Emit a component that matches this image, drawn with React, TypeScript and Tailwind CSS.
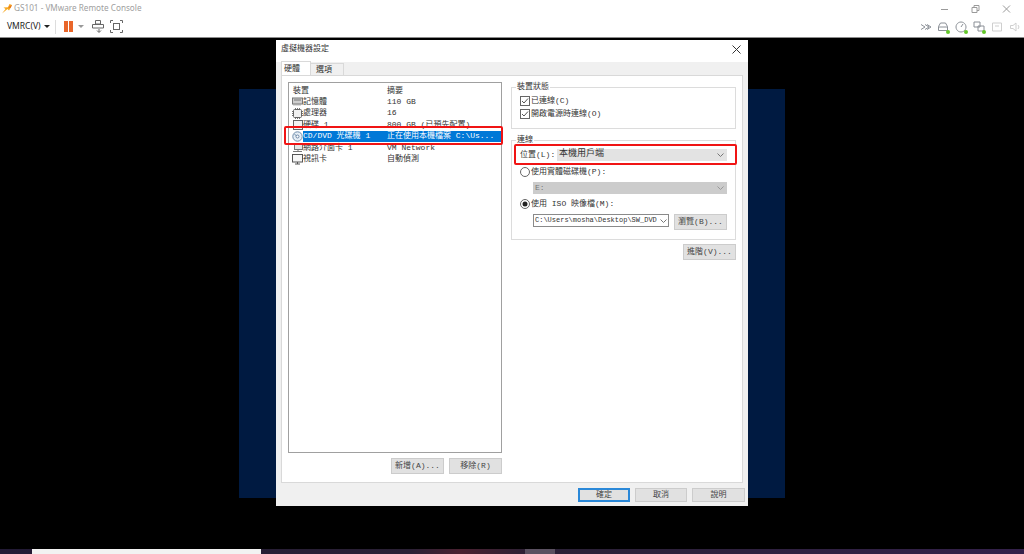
import React from "react";

const MONO = "font-['Liberation_Mono','Noto_Sans_CJK_TC',monospace]";

const devices = [
  { name: "記憶體", summary: "110 GB", icon: "mem" },
  { name: "處理器", summary: "16", icon: "cpu" },
  { name: "硬碟 1", summary: "800 GB (已預先配置)", icon: "disk" },
  { name: "CD/DVD 光碟機 1", summary: "正在使用本機檔案 C:\\Us...", icon: "cd", selected: true },
  { name: "網路介面卡 1", summary: "VM Network", icon: "net" },
  { name: "視訊卡", summary: "自動偵測", icon: "disp" },
];

const DeviceIcon = ({ kind }: { kind: string }) => {
  if (kind === "cd")
    return (
      <svg width="11" height="11" viewBox="0 0 11 11" fill="none">
        <circle cx="5.5" cy="5.5" r="4.7" fill="#e6eef6" stroke="#6f8dab" />
        <circle cx="5.5" cy="5.5" r="1.5" fill="#fff" stroke="#4f6f92" strokeWidth="0.8" />
        <path d="M2.5 3l2 2" stroke="#6f8dab" />
      </svg>
    );
  if (kind === "mem")
    return (
      <svg width="11" height="9" viewBox="0 0 11 9" fill="none">
        <rect x="0.5" y="1" width="10" height="6" fill="#cfcfcf" stroke="#777" />
        <path d="M2 7.5v1M4 7.5v1M6 7.5v1M8 7.5v1M2 3h7" stroke="#777" />
      </svg>
    );
  if (kind === "cpu")
    return (
      <svg width="11" height="11" viewBox="0 0 11 11" fill="none">
        <rect x="1.5" y="1.5" width="8" height="8" rx="1" fill="#f1f1f1" stroke="#666" />
        <path d="M3.5 0v1M5.5 0v1M7.5 0v1M3.5 10v1M5.5 10v1M7.5 10v1M0 3.5h1M0 5.5h1M0 7.5h1M10 3.5h1M10 5.5h1M10 7.5h1" stroke="#777" />
      </svg>
    );
  if (kind === "disk")
    return (
      <svg width="11" height="10" viewBox="0 0 11 10" fill="none">
        <rect x="1.5" y="0.5" width="9" height="9" fill="#f4f4f4" stroke="#666" />
      </svg>
    );
  if (kind === "net")
    return (
      <svg width="11" height="10" viewBox="0 0 11 10" fill="none">
        <rect x="2.5" y="0.5" width="8" height="6" fill="#e6e6e6" stroke="#777" />
        <path d="M1 8.5h9M6 6.5v2" stroke="#777" />
      </svg>
    );
  return (
    <svg width="11" height="11" viewBox="0 0 11 11" fill="none">
      <rect x="0.5" y="0.5" width="10" height="7.5" fill="#f7f7f7" stroke="#555" />
      <path d="M3 10h5M5.5 8v2" stroke="#555" />
    </svg>
  );
};

const Btn = ({ label, w = "w-[53px]", h = "h-4", primary = false }: { label: string; w?: string; h?: string; primary?: boolean }) => (
  <div
    className={`${w} ${h} flex items-center justify-center text-[#444] bg-[#e1e1e1] ${primary ? "border-2 border-[#2a88d8]" : "border border-[#cccccc]"}`}
  >
    {label}
  </div>
);

const Check = ({ label }: { label: string }) => (
  <div className="flex items-center gap-[1px] h-[13px]">
    <svg width="10" height="10" viewBox="0 0 10 10" fill="none">
      <rect x="0.5" y="0.5" width="9" height="9" fill="#fff" stroke="#666" />
      <path d="M2 5l2 2 4-4.5" stroke="#555" />
    </svg>
    <span>{label}</span>
  </div>
);

const Radio = ({ label, on = false }: { label: string; on?: boolean }) => (
  <div className="flex items-center gap-[1px] h-[12px]">
    <svg width="10" height="10" viewBox="0 0 10 10" fill="none">
      <circle cx="5" cy="5" r="4.5" fill="#fff" stroke="#666" />
      {on && <circle cx="5" cy="5" r="2.5" fill="#222" />}
    </svg>
    <span>{label}</span>
  </div>
);

const Chevron = ({ color = "#777" }: { color?: string }) => (
  <svg width="7" height="4" viewBox="0 0 7 4" fill="none">
    <path d="M0.5 0.5l3 3 3-3" stroke={color} />
  </svg>
);

const Group = ({ title, className, children }: { title: string; className: string; children: React.ReactNode }) => (
  <div className={`relative border border-[#dcdcdc] ${className}`}>
    <span className="absolute -top-[6px] left-[4px] bg-white px-[1px] leading-[10px]">{title}</span>
    {children}
  </div>
);

const Logo = () => (
  <svg width="10" height="10" viewBox="0 0 10 10">
    <path d="M0 9.5L3.5 5 1.5 3.5 6 3.2 7.5 0 10 1 8.5 4 7 6.5 5.5 5z" fill="#f6a821" />
    <path d="M6 3.2L10 1 8.5 4z" fill="#e8701e" />
  </svg>
);

const StatusIcon = ({ d, dot = true, dim = false }: { d: string; dot?: boolean; dim?: boolean }) => (
  <span className="relative block w-[12px] h-[12px]">
    <svg width="12" height="12" viewBox="0 0 12 12" fill="none">
      <path d={d} stroke={dim ? "#cfcfcf" : "#8a8f96"} />
    </svg>
    {dot && <span className="absolute right-[-1px] bottom-[-1px] w-[4px] h-[4px] rounded-full bg-[#62c828]" />}
  </span>
);

export default function App() {
  return (
    <div className="relative w-[1024px] h-[554px] overflow-hidden flex flex-col bg-black font-['Noto_Sans_CJK_TC','Noto_Sans',sans-serif]">
      {/* window title */}
      <div className="h-[16px] shrink-0 bg-white flex items-center pl-[2px] pt-[1px] text-[#a0a0a0] font-['Noto_Sans',sans-serif]">
        <Logo />
        <span className="ml-[2px] text-[8.2px]">GS101 - VMware Remote Console</span>
        <div className="ml-auto pr-[4px]">
          <svg width="85" height="10" viewBox="0 0 85 10" fill="none" stroke="#9a9a9a">
            <path d="M6 5.5h7" />
            <path d="M37 3.5h5v5h-5zM39 3.5v-2h5v5h-2" />
            <path d="M68 1.5l7 7M75 1.5l-7 7" />
          </svg>
        </div>
      </div>

      {/* toolbar */}
      <div className="h-[22px] shrink-0 bg-white flex items-center border-b border-[#8c8c8c] pl-[7px] text-[8.5px] text-[#222] font-['Noto_Sans',sans-serif]">
        <span>VMRC(V)</span>
        <span className="ml-[3px] border-x-[3px] border-x-transparent border-t-[3px] border-t-[#222]" />
        <span className="ml-[5px] w-px h-[14px] bg-[#dddddd]" />
        <span className="ml-[8px] flex gap-[1px]">
          <span className="w-[4px] h-[11px] bg-[#e9662a]" />
          <span className="w-[4px] h-[11px] bg-[#e9662a]" />
        </span>
        <span className="ml-[5px] border-x-[3px] border-x-transparent border-t-[3px] border-t-[#999]" />
        <svg className="ml-[8px]" width="12" height="13" viewBox="0 0 12 13" fill="none" stroke="#666">
          <path d="M3.5.5h5v3.5h-5zM.5 4.5h11v3.5H.5zM7 9v3M5 10.5l2 2 2-2" />
        </svg>
        <svg className="ml-[6px]" width="13" height="13" viewBox="0 0 13 13" fill="none" stroke="#666">
          <path d="M.5 3V.5H3M10 .5h2.5V3M12.5 10v2.5H10M3 12.5H.5V10" />
          <rect x="3.5" y="3.5" width="6" height="6" />
        </svg>
        <div className="ml-auto flex items-center gap-[6px] pr-[3px]">
          <svg width="10" height="6" viewBox="0 0 10 6" fill="none" stroke="#8a8f96">
            <path d="M0 .5l4 2.5-4 2.5M4 .5l4 2.5-4 2.5M6 .5l4 2.5-4 2.5" />
          </svg>
          <StatusIcon d="M1.5 9.5h9v-4l-2-3.5h-5l-2 3.5zM1.5 6h9" />
          <StatusIcon d="M6 1a5 5 0 1 0 .01 0M6 6l2-3" />
          <StatusIcon d="M1 1h6v5H1zM5 5h6v5H5z" />
          <StatusIcon d="M1.5 2h9v8h-9zM4 5h4" dot={false} dim />
          <StatusIcon d="M1.5 4.5H4L7 2v8L4 7.5H1.5zM9 4l1 2-1 2" dot={false} dim />
        </div>
      </div>

      {/* console */}
      <div className="flex-1 bg-black flex justify-center pt-[51px]">
        <div className="w-[546px] h-[409px] bg-[#001a41]" />
      </div>

      {/* host taskbar peeking in */}
      <div className="h-[5px] shrink-0 flex bg-[linear-gradient(90deg,#221a35_0%,#2a2035_40%,#4a2030_45%,#2a2035_52%,#33204a_100%)]">
        <div className="ml-[32px] w-[229px] bg-[#f2f2f2]" />
        <div className="ml-[264px] w-[30px] bg-[#5a5060]" />
      </div>

      {/* dialog window */}
      <div className={`absolute left-[276px] top-[40px] w-[472px] h-[466px] flex flex-col bg-[#f0f0f0] text-[8px] text-[#333] ${MONO}`}>
        <div className="h-[22px] shrink-0 bg-white flex items-center justify-between pl-[5px] pr-[7px] pb-[4px]">
          <span>虛擬機器設定</span>
          <svg width="9" height="9" viewBox="0 0 9 9" stroke="#333" fill="none">
            <path d="M.5.5l8 8M8.5.5l-8 8" />
          </svg>
        </div>
        <div className="h-[13px] shrink-0 flex pl-[5px] items-end">
          <div className="w-[30px] h-[14px] bg-white border border-b-0 border-[#d9d9d9] flex items-center pl-[2px]">硬體</div>
          <div className="w-[33px] h-[12px] bg-[#f0f0f0] border border-b-0 border-l-0 border-[#d9d9d9] flex items-center pl-[5px]">選項</div>
        </div>
        <div className="mx-[5px] h-[408px] shrink-0 bg-white border border-[#d9d9d9] flex pl-[6px] pt-[6px] gap-[9px]">
          {/* device list */}
          <div className="w-[214px] flex flex-col gap-[5px]">
            <div className="h-[371px] border border-[#a0a0a0] pt-[2px]">
              <div className="flex h-[11px] items-center">
                <span className="w-[98px] pl-[4px]">裝置</span>
                <span>摘要</span>
              </div>
              {devices.map((d) => (
                <div key={d.name} className="flex h-[11.5px] items-center whitespace-nowrap pl-[3px]">
                  <DeviceIcon kind={d.icon} />
                  <div className={`flex-1 h-full flex items-center ${d.selected ? "bg-[#0078d7] text-white" : ""}`}>
                    <span className="w-[84px]">{d.name}</span>
                    <span>{d.summary}</span>
                  </div>
                </div>
              ))}
            </div>
            <div className="flex justify-end gap-[5px]">
              <Btn label="新增(A)..." />
              <Btn label="移除(R)" />
            </div>
          </div>

          {/* right settings */}
          <div className="w-[225px] pt-[5px] flex flex-col">
            <Group title="裝置狀態" className="h-[42px] pl-[8px] pt-[6px]">
              <Check label="已連線(C)" />
              <Check label="開啟電源時連線(O)" />
            </Group>
            <Group title="連線" className="mt-[11px] h-[100px] pl-[8px] pt-[8px] pr-[8px]">
              <div className="flex items-center h-[12px] mb-[5px]">
                <span className="w-[37px]">位置(L):</span>
                <div className="flex-1 h-[12px] bg-[#e3e3e3] flex items-center justify-between pl-[2px] pr-[3px]">
                  <span className="text-[9px]">本機用戶端</span>
                  <Chevron />
                </div>
              </div>
              <Radio label="使用實體磁碟機(P):" />
              <div className="ml-[13px] mt-[4px] h-[12px] bg-[#cccccc] text-[#777] flex items-center justify-between pl-[2px] pr-[3px]">
                <span>E:</span>
                <Chevron color="#999" />
              </div>
              <div className="mt-[4px]">
                <Radio label="使用 ISO 映像檔(M):" on />
              </div>
              <div className="ml-[13px] mt-[4px] flex gap-[5px] items-start">
                <div className="w-[136px] h-[13px] bg-white border border-[#8a8a8a] flex items-center justify-between px-[1px] whitespace-nowrap text-[7px]">
                  <span>C:\Users\mosha\Desktop\SW_DVD</span>
                  <span className="shrink-0 pl-[1px]"><Chevron /></span>
                </div>
                <Btn label="瀏覽(B)..." />
              </div>
            </Group>
            <div className="mt-[4px] flex justify-end">
              <Btn label="進階(V)..." />
            </div>
          </div>
        </div>
        <div className="flex-1 flex justify-end items-center gap-[5px] pr-[3px]">
          <Btn label="確定" w="w-[52px]" h="h-[14px]" primary />
          <Btn label="取消" w="w-[52px]" h="h-[14px]" />
          <Btn label="說明" w="w-[53px]" h="h-[14px]" />
        </div>

        {/* red callouts */}
        <div className="absolute left-[8px] top-[86px] w-[219px] h-[19px] border-2 border-[#f01414] rounded-[2px]" />
        <div className="absolute left-[238px] top-[104px] w-[223px] h-[21px] border-2 border-[#f01414] rounded-[2px]" />
      </div>
    </div>
  );
}
